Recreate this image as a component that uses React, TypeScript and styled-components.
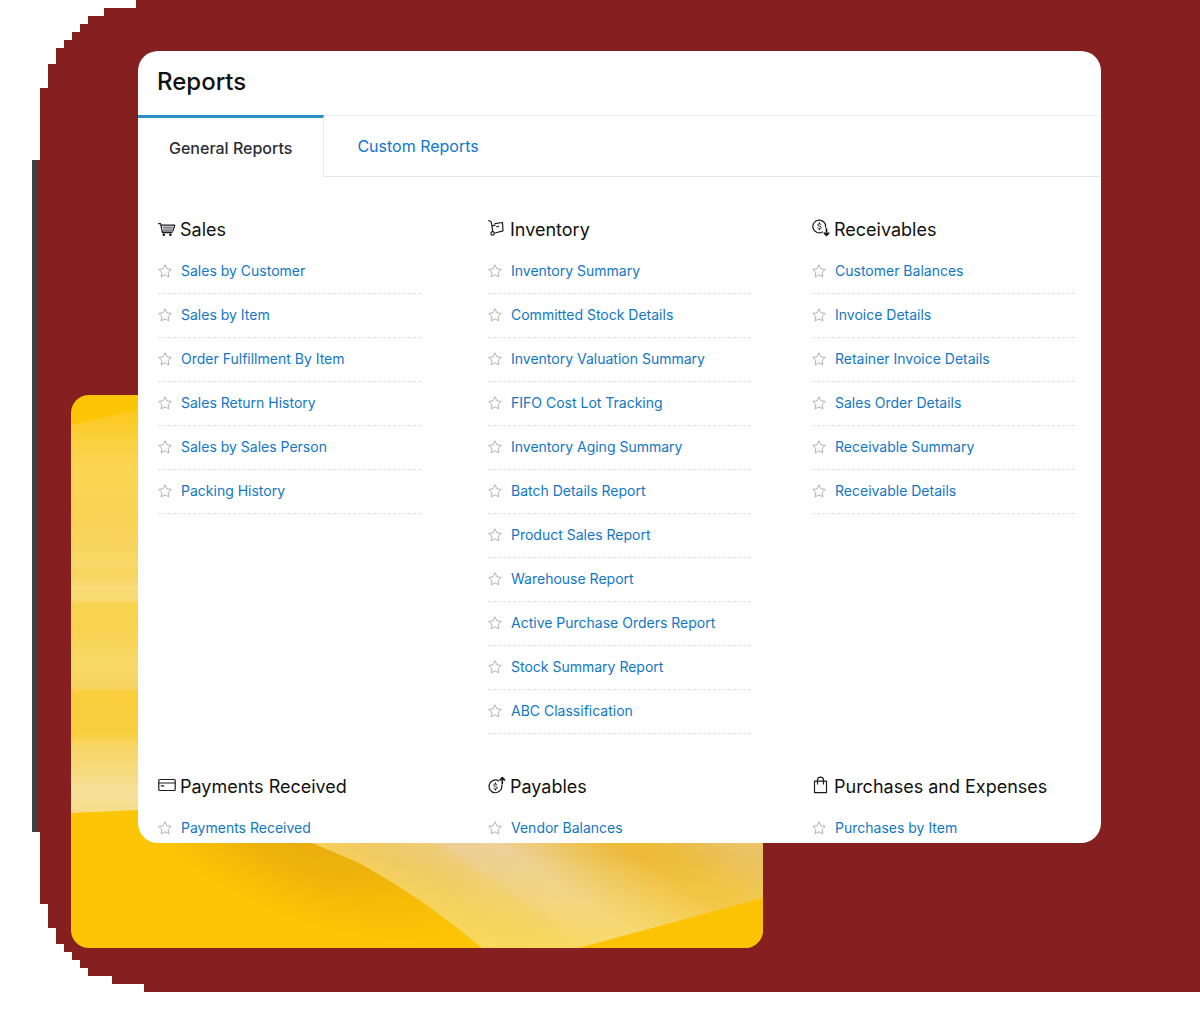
import React from "react";
import styled, { createGlobalStyle } from "styled-components";

const GlobalStyle = createGlobalStyle`
  *, *::before, *::after { box-sizing: border-box; }
  body {
    margin: 0;
    background: #fff;
    font-family: Inter, "Liberation Sans", sans-serif;
    color: #111;
  }
`;

const Stage = styled.main`
  position: relative;
  isolation: isolate;
  padding: 51px 99px 149px 138px;
  margin-bottom: 30px;
`;

/* Maroon backdrop whose left corners are cut in 8px stairs. */
const Backdrop = styled.div`
  position: absolute;
  inset: 0;
  z-index: -2;
  background: linear-gradient(to right, #3e4043 38px, #861f20 38px);
  clip-path: polygon(
    136px 0, 136px 8px, 104px 8px, 104px 16px, 88px 16px, 88px 24px,
    80px 24px, 80px 32px, 72px 32px, 72px 40px, 64px 40px, 64px 48px,
    56px 48px, 56px 64px, 48px 64px, 48px 88px, 40px 88px, 40px 160px,
    32px 160px,
    32px calc(100% - 160px), 40px calc(100% - 160px),
    40px calc(100% - 88px), 48px calc(100% - 88px),
    48px calc(100% - 64px), 56px calc(100% - 64px),
    56px calc(100% - 48px), 64px calc(100% - 48px),
    64px calc(100% - 40px), 72px calc(100% - 40px),
    72px calc(100% - 32px), 80px calc(100% - 32px),
    80px calc(100% - 24px), 88px calc(100% - 24px),
    88px calc(100% - 16px), 112px calc(100% - 16px),
    112px calc(100% - 8px), 144px calc(100% - 8px),
    144px 100%, 100% 100%, 100% 0
  );
`;

const Artwork = styled.svg`
  position: absolute;
  z-index: -1;
  left: 71px;
  bottom: 44px;
  width: calc(100% - 508px);
  height: 553px;
  border-radius: 18px;
`;

const Card = styled.section`
  background: #fff;
  border-radius: 20px;
  overflow: hidden;
`;

const Title = styled.h1`
  margin: 0;
  padding: 15px 20px 17px 19px;
  font-size: 24px;
  line-height: 32px;
  font-weight: 500;
`;

const Tabs = styled.div`
  display: flex;
  height: 62px;
`;

const Tab = styled.button<{ $active?: boolean }>`
  display: flex;
  align-items: center;
  flex: ${(p) => (p.$active ? "none" : "1")};
  margin: 0;
  padding: ${(p) => (p.$active ? "0 31px" : "0 33px")};
  border: 0 solid #e8e8ea;
  border-top: ${(p) => (p.$active ? "3px solid #2890cb" : "1px solid #f0f0f2")};
  border-right-width: ${(p) => (p.$active ? "1px" : "0")};
  border-bottom-width: ${(p) => (p.$active ? "0" : "1px")};
  background: transparent;
  color: ${(p) => (p.$active ? "#2b2d33" : "#1076cc")};
  font: ${(p) => (p.$active ? 500 : 400)} 16px/20px Inter, "Liberation Sans", sans-serif;
  cursor: pointer;
`;

const Groups = styled.div`
  display: grid;
  grid-template-columns: 330fr 324fr 263fr;
  row-gap: 41px;
  padding: 41px 26px 0 20px;
`;

const GroupTitle = styled.h2`
  display: flex;
  align-items: center;
  gap: 4px;
  margin: 0 0 8px;
  font-size: 18px;
  line-height: 24px;
  font-weight: 400;
  white-space: nowrap;
`;

const GroupIcon = styled.svg`
  flex: none;
  width: 18px;
  height: 18px;
  margin-bottom: 4px;
  fill: none;
  stroke: #1b1b1f;
  stroke-width: 1.2;
  stroke-linecap: round;
  stroke-linejoin: round;
`;

const List = styled.ul<{ $cut?: boolean }>`
  max-width: 263px;
  margin: 0;
  padding: 0;
  list-style: none;

  li {
    display: flex;
    align-items: center;
    gap: 9px;
    padding: 12px 0 ${(p) => (p.$cut ? "6px" : "13px")};
    background: ${(p) =>
      p.$cut
        ? "none"
        : "repeating-linear-gradient(to right, #e0e0e2 0 3px, transparent 3px 5px) left bottom / 100% 1px no-repeat"};
    border-bottom: ${(p) => (p.$cut ? "0" : "1px solid transparent")};
    background-origin: border-box;
  }
`;

const StarButton = styled.button`
  display: flex;
  flex: none;
  margin: 0;
  padding: 0;
  border: 0;
  background: none;
  cursor: pointer;

  svg {
    width: 14px;
    height: 14px;
    fill: none;
    stroke: #b2b2b6;
    stroke-width: 1;
    stroke-linejoin: round;
  }
`;

const ReportLink = styled.a`
  color: #1177c4;
  font-size: 14px;
  line-height: 18px;
  text-decoration: none;
  white-space: nowrap;
`;

const Dollar = ({ cy }: { cy: number }) => (
  <path
    strokeWidth="1"
    d={`M9 ${cy - 1.6}c-.3-.6-.9-.9-1.6-.9-.9 0-1.6.4-1.6 1.200 0 1.700 3.400.8 3.400 2.600 0 .8-.8 1.300-1.700 1.300-.8 0-1.500-.3-1.800-1M7.500 ${cy - 3.6}v1M7.500 ${cy + 2.6}v1`}
  />
);

const icons: Record<string, React.ReactNode> = {
  sales: (
    <>
      <path d="M.6 4.700h2l1.800 9H14M3 6.200h13.700L14.900 12H4.200" />
      <path strokeWidth="0.8" d="M5.200 8.200h9.200M5.600 10h8.600" />
      <circle cx="5.8" cy="15.700" r=".7" fill="#1b1b1f" />
      <circle cx="12.400" cy="15.700" r=".7" fill="#1b1b1f" />
    </>
  ),
  inventory: (
    <>
      <path d="M.8 1.600l2.500 1.500 1.500 9.400M7 14l8-2.200-.5-8.300-7.500 1.200M4 6.800l3-.6M8.800 7.600l1.800-.3" />
      <circle cx="4.600" cy="14.400" r="1.700" />
    </>
  ),
  receivables: (
    <>
      <path d="M13.600 8.200A6.400 6.400 0 1 0 10.500 13" />
      <Dollar cy={7.3} />
      <path strokeWidth="1.7" d="M14.500 9.800v6.400M12.300 14.200l2.200 2.200 2.200-2.200" />
    </>
  ),
  payments: (
    <>
      <rect x=".8" y="3.500" width="16.400" height="11" rx="1" />
      <path d="M.8 7h16.400M3.200 9.800h2.600" />
    </>
  ),
  payables: (
    <>
      <path d="M10.800 4.900A6.400 6.400 0 1 0 13.700 9" />
      <Dollar cy={10.5} />
      <path strokeWidth="1.7" d="M14.300 7.600V1.900M12.100 3.800l2.200-2.200 2.200 2.200" />
    </>
  ),
  purchases: (
    <path d="M2.500 5.200h12v11.400h-12zM5.500 8V4.200a3 3 0 0 1 6 0V8" />
  ),
};

type Group = { icon: string; title: string; reports: string[]; cut?: boolean };

const groups: Group[] = [
  {
    icon: "sales",
    title: "Sales",
    reports: [
      "Sales by Customer",
      "Sales by Item",
      "Order Fulfillment By Item",
      "Sales Return History",
      "Sales by Sales Person",
      "Packing History",
    ],
  },
  {
    icon: "inventory",
    title: "Inventory",
    reports: [
      "Inventory Summary",
      "Committed Stock Details",
      "Inventory Valuation Summary",
      "FIFO Cost Lot Tracking",
      "Inventory Aging Summary",
      "Batch Details Report",
      "Product Sales Report",
      "Warehouse Report",
      "Active Purchase Orders Report",
      "Stock Summary Report",
      "ABC Classification",
    ],
  },
  {
    icon: "receivables",
    title: "Receivables",
    reports: [
      "Customer Balances",
      "Invoice Details",
      "Retainer Invoice Details",
      "Sales Order Details",
      "Receivable Summary",
      "Receivable Details",
    ],
  },
  { icon: "payments", title: "Payments Received", reports: ["Payments Received"], cut: true },
  { icon: "payables", title: "Payables", reports: ["Vendor Balances"], cut: true },
  { icon: "purchases", title: "Purchases and Expenses", reports: ["Purchases by Item"], cut: true },
];

const YellowArtwork = () => (
  <Artwork viewBox="0 0 692 553" preserveAspectRatio="none" aria-hidden="true">
    <defs>
      <linearGradient id="bands" x1="0" y1="0" x2="0" y2="418" gradientUnits="userSpaceOnUse">
        <stop offset="0.04" stopColor="#fcc91c" />
        <stop offset="0.1" stopColor="#fad03a" />
        <stop offset="0.18" stopColor="#fad553" />
        <stop offset="0.3" stopColor="#f8d254" />
        <stop offset="0.41" stopColor="#f9d868" />
        <stop offset="0.43" stopColor="#f8d45e" />
        <stop offset="0.46" stopColor="#f8da76" />
        <stop offset="0.49" stopColor="#f8da72" />
        <stop offset="0.5" stopColor="#f8d34e" />
        <stop offset="0.56" stopColor="#f8d250" />
        <stop offset="0.63" stopColor="#f8d865" />
        <stop offset="0.7" stopColor="#f8d562" />
        <stop offset="0.71" stopColor="#f9cd3c" />
        <stop offset="0.81" stopColor="#f9cf40" />
        <stop offset="0.84" stopColor="#f7d666" />
        <stop offset="0.9" stopColor="#f6da7e" />
        <stop offset="0.95" stopColor="#f6e19c" />
        <stop offset="1" stopColor="#f6dd88" />
      </linearGradient>
      <radialGradient
        id="shade"
        cx="0"
        cy="0"
        r="1"
        gradientUnits="userSpaceOnUse"
        gradientTransform="translate(230 440) rotate(22) scale(220 90)"
      >
        <stop offset="0" stopColor="#e9ae0e" />
        <stop offset="0.35" stopColor="#edb30c" />
        <stop offset="0.7" stopColor="#f5bc08" stopOpacity="0.7" />
        <stop offset="1" stopColor="#fcc505" stopOpacity="0" />
      </radialGradient>
      <linearGradient id="swoosh" x1="-131" y1="195" x2="6" y2="-8" gradientUnits="userSpaceOnUse">
        <stop offset="0" stopColor="#f6cf5c" />
        <stop offset="0.14" stopColor="#efc964" />
        <stop offset="0.26" stopColor="#eecb78" />
        <stop offset="0.3" stopColor="#edd093" />
        <stop offset="0.42" stopColor="#edd196" />
        <stop offset="0.56" stopColor="#edc560" />
        <stop offset="0.7" stopColor="#edb935" />
        <stop offset="0.8" stopColor="#edbc40" />
        <stop offset="0.9" stopColor="#e9c05a" />
        <stop offset="1" stopColor="#ebc468" />
      </linearGradient>
      <linearGradient id="glow" x1="0" y1="460" x2="0" y2="553" gradientUnits="userSpaceOnUse">
        <stop offset="0" stopColor="#fbdc5c" stopOpacity="0" />
        <stop offset="1" stopColor="#fbdc5c" stopOpacity="0.8" />
      </linearGradient>
    </defs>
    <rect width="692" height="553" fill="#fcc505" />
    <path d="M0 30L67 14H692V418H300L67 415L0 418z" fill="url(#bands)" />
    <rect y="418" width="692" height="135" fill="url(#shade)" />
    <path d="M220 440Q262 456 292 470Q356 506 411 553H508L692 503V440z" fill="url(#swoosh)" />
    <path d="M220 440Q262 456 292 470Q356 506 411 553H508L692 503V440z" fill="url(#glow)" />
    <path d="M508 553L692 503V553z" fill="#fcc304" />
  </Artwork>
);

export default function App() {
  return (
    <>
      <GlobalStyle />
      <Stage>
        <Backdrop />
        <YellowArtwork />
        <Card>
          <Title>Reports</Title>
          <Tabs role="tablist">
            <Tab role="tab" aria-selected="true" $active>
              General Reports
            </Tab>
            <Tab role="tab" aria-selected="false">
              Custom Reports
            </Tab>
          </Tabs>
          <Groups>
            {groups.map((group) => (
              <section key={group.title}>
                <GroupTitle>
                  <GroupIcon viewBox="0 0 18 18" aria-hidden="true">
                    {icons[group.icon]}
                  </GroupIcon>
                  {group.title}
                </GroupTitle>
                <List $cut={group.cut}>
                  {group.reports.map((report) => (
                    <li key={report}>
                      <StarButton aria-label={`Add ${report} to favorites`}>
                        <svg viewBox="0 0 14 14" aria-hidden="true">
                          <path d="M7 .8l1.900 4 4.400.6-3.200 3 .8 4.500L7 10.800l-3.900 2.100.8-4.500-3.200-3 4.400-.6z" />
                        </svg>
                      </StarButton>
                      <ReportLink href="#">{report}</ReportLink>
                    </li>
                  ))}
                </List>
              </section>
            ))}
          </Groups>
        </Card>
      </Stage>
    </>
  );
}
